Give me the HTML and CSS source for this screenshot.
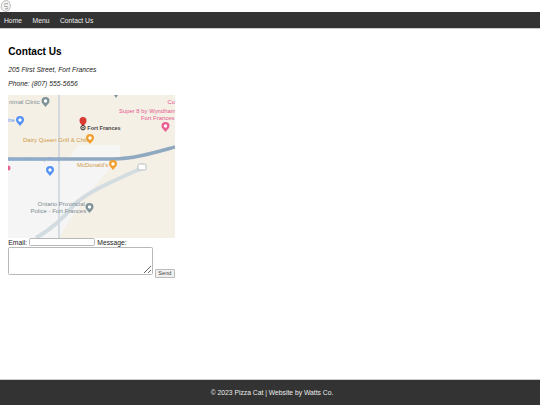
FILE: index.html
```html
<!DOCTYPE html>
<html lang="en">
<head>
    <meta charset="UTF-8">
    <meta name="viewport" content="width=device-width, initial-scale=1.0">
    <title>Contact Us</title>
    <link rel="stylesheet" href="styles.css">
</head>
<body>
    <header>
        <svg class="logo" width="12" height="12" viewBox="0 0 12 12">
            <path d="M3 2 L4 .8 L8 .8 L9.500 2.500 L10.500 6 L9 10 L6 11.500 L3 10.500 L1.200 8 L1.500 4 Z" fill="#f4f4f2" stroke="#b0b0ac" stroke-width=".8"/>
            <path d="M4 4 L8 3.500 M4 6 L8 7 M5 9 L8 8.500" stroke="#8a8a8a" stroke-width=".8" fill="none"/>
        </svg>
        <nav>
            <a href="#">Home</a>
            <a href="#">Menu</a>
            <a href="#">Contact Us</a>
        </nav>
    </header>

    <main>
        <h1>Contact Us</h1>
        <p class="info">205 First Street, Fort Frances</p>
        <p class="info">Phone: (807) 555-5656</p>

        <svg class="map" width="167" height="143" viewBox="0 0 167 143">
            <defs>
                <g id="pin">
                    <path d="M0 5 C-1.500 2.800 -4 1.500 -4 -1 A4 4 0 1 1 4 -1 C4 1.500 1.500 2.800 0 5 Z"/>
                    <circle cy="-1" r="1.700" fill="#fff"/>
                </g>
            </defs>
            <rect width="167" height="143" fill="#f5f0e6"/>
            <path d="M0 65 L109 65 L77 103 L50 143 L0 143 Z" fill="#f5f5f5"/>
            <path d="M62 62 L70 50 L112 50 L112 62 Z" fill="#f6f6f4"/>
            <path d="M51 0 V143" stroke="#ccd5dd" stroke-width="1.600" fill="none"/>
            <path d="M28 143 C45 133 55 124 66 110 C80 96 110 84 134 73" stroke="#d3dce1" stroke-width="4" fill="none"/>
            <path d="M0 64 L105 64 C125 64 145 58 167 52" stroke="#8fa9c0" stroke-width="3.600" fill="none"/>
            <rect x="130" y="69" width="8" height="6" rx="1.500" fill="#fff" stroke="#9aa5ad" stroke-width=".7"/>

            <use href="#pin" x="37.500" y="7" fill="#7e9398"/>
            <use href="#pin" x="12" y="26" fill="#5491f5"/>
            <use href="#pin" x="42" y="76" fill="#5491f5"/>
            <use href="#pin" x="82" y="44" fill="#f1a02f"/>
            <use href="#pin" x="105" y="70" fill="#f1a02f"/>
            <use href="#pin" x="157.500" y="32" fill="#ea5f92"/>
            <use href="#pin" x="81.500" y="113" fill="#7e9398"/>
            <path d="M106 0 L110 0 L108 3 Z" fill="#7e9398"/>
            <circle cx="0" cy="73" r="2.500" fill="#ea5f92"/>

            <path d="M75 32 C74 29.500 71.500 28.500 71.500 25.500 A3.500 3.500 0 1 1 78.500 25.500 C78.500 28.500 76 29.500 75 32 Z" fill="#d93a32"/>
            <circle cx="75" cy="32.700" r="2.200" fill="#f5f0e6" stroke="#222" stroke-width="1"/>
            <circle cx="75" cy="32.700" r=".8" fill="#222"/>

            <text class="label grey" x="1" y="9">nimal Clinic</text>
            <text class="label blue" x="0" y="27">ire</text>
            <text class="label dark" x="79.300" y="34.500">Fort Frances</text>
            <text class="label orange" x="15" y="46.500">Dairy Queen Grill &amp; Chill</text>
            <text class="label orange" x="69" y="72">McDonald's</text>
            <text class="label pink" x="111" y="18">Super 8 by Wyndham</text>
            <text class="label pink" x="133" y="25">Fort Frances</text>
            <text class="label pink" x="159.500" y="8.500">Co</text>
            <text class="label road" x="0" y="66">Sunset Country Pkwy</text>
            <text class="label grey" x="29.500" y="111">Ontario Provincial</text>
            <text class="label grey" x="22.500" y="118">Police - Fort Frances</text>
        </svg>

        <form class="contact-form">
            <label for="email">Email:</label>
            <input type="text" id="email">
            <label for="message">Message:</label>
            <textarea id="message"></textarea>
            <button type="submit">Send</button>
        </form>
    </main>

    <footer>
        <p>© 2023 Pizza Cat | Website by Watts Co.</p>
    </footer>
</body>
</html>
```

FILE: styles.css
```css
html, body {
    height: 100%;
}
body {
    font-family: "Liberation Sans", Arial, sans-serif;
    font-size: 6.75px;
    color: #000;
    margin: 0;
    display: flex;
    flex-direction: column;
    background-color: #fff;
}
.logo {
    display: block;
    height: 12px;
}
nav {
    box-sizing: border-box;
    background-color: #333;
    border-bottom: 1px solid #ccc;
    height: 17px;
    display: flex;
    align-items: center;
    gap: 10.5px;
    padding-left: 4px;
}
nav a {
    color: #eee;
    text-decoration: none;
}
main {
    flex: 1;
    padding: 0 8.25px;
}
h1 {
    font-size: 10.125px;
    line-height: 11.5px;
    margin: 17px 0 8.2px;
}
.info {
    font-style: italic;
    color: #222;
    line-height: 7.75px;
    margin: 0 0 6.75px;
}
.map {
    display: block;
    margin-top: .25px;
}
.label {
    font-size: 6px;
}
.grey {
    fill: #7d8b90;
}
.dark {
    fill: #444;
    font-weight: bold;
    font-size: 5.5px;
}
.orange {
    fill: #cf9a45;
}
.pink {
    fill: #e4568f;
    font-size: 5.9px;
}
.blue {
    fill: #5491f5;
}
.road {
    fill: #8fb0e0;
    font-size: 5.5px;
}
.contact-form {
    width: 170px;
    line-height: 8.5px;
    color: #222;
}
.contact-form input {
    box-sizing: border-box;
    width: 66.5px;
    height: 8.5px;
    padding: 0 1px;
    margin: 0;
    border: 1px solid #b8b8b8;
    border-radius: 1.5px;
    vertical-align: -2px;
}
.contact-form textarea {
    box-sizing: border-box;
    display: inline-block;
    width: 144.5px;
    height: 28.5px;
    padding: 1px;
    margin: 0;
    border: 1px solid #b8b8b8;
    border-radius: 1.5px;
    vertical-align: top;
}
.contact-form button {
    box-sizing: border-box;
    font-family: "Liberation Sans", Arial, sans-serif;
    font-size: 5.6px;
    line-height: 6px;
    color: #444;
    height: 9px;
    width: 20.5px;
    padding: 0;
    margin: 22px 0 0;
    background-color: #f0f0f0;
    border: 1px solid #bbb;
    border-radius: 1px;
    vertical-align: top;
}
footer {
    box-sizing: border-box;
    background-color: #333;
    border-top: 1px solid #ccc;
    color: #eee;
    height: 26px;
    padding-left: 4px;
    display: flex;
    align-items: center;
    justify-content: center;
}
footer p {
    margin: 0;
}
```
